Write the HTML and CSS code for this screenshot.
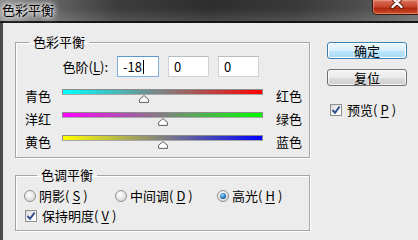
FILE: index.html
```html
<!DOCTYPE html>
<html>
<head>
<meta charset="utf-8">
<title>色彩平衡</title>
<link rel="stylesheet" href="styles.css">
</head>
<body>
<div class="window">
  <div class="titlebar">
    <span class="title">色彩平衡</span>
    <span class="close">
      <svg width="14" height="10" viewBox="0 0 14 10">
        <path d="M2.5 -2 L11.5 7 M11.5 -2 L2.5 7" stroke="#5a1a0c" stroke-width="4.2" stroke-linecap="round"/>
        <path d="M2.5 -2 L11.5 7 M11.5 -2 L2.5 7" stroke="#ffffff" stroke-width="2.4" stroke-linecap="round"/>
      </svg>
    </span>
  </div>
  <div class="client">
    <div class="left">
      <fieldset class="group g1">
        <legend>色彩平衡</legend>
        <div class="levels">
          <span class="lv-label">色阶(<u>L</u>):</span>
          <span class="input focus w42">-18<span class="caret"></span></span>
          <span class="input">0</span>
          <span class="input">0</span>
        </div>
        <div class="slider-row">
          <span class="sl-left">青色</span>
          <div class="slider">
            <div class="track t-cr"></div>
            <span class="thumb" style="left:41%"><svg width="10" height="8" viewBox="0 0 10 8"><path d="M5 0.6 L9.4 4.2 L9.4 7.4 L0.6 7.4 L0.6 4.2 Z" fill="#fff" stroke="#5f5f5f" stroke-width="1" stroke-linejoin="round"/></svg></span>
          </div>
          <span class="sl-right">红色</span>
        </div>
        <div class="slider-row">
          <span class="sl-left">洋红</span>
          <div class="slider">
            <div class="track t-mg"></div>
            <span class="thumb" style="left:50%"><svg width="10" height="8" viewBox="0 0 10 8"><path d="M5 0.6 L9.4 4.2 L9.4 7.4 L0.6 7.4 L0.6 4.2 Z" fill="#fff" stroke="#5f5f5f" stroke-width="1" stroke-linejoin="round"/></svg></span>
          </div>
          <span class="sl-right">绿色</span>
        </div>
        <div class="slider-row">
          <span class="sl-left">黄色</span>
          <div class="slider">
            <div class="track t-yb"></div>
            <span class="thumb" style="left:50%"><svg width="10" height="8" viewBox="0 0 10 8"><path d="M5 0.6 L9.4 4.2 L9.4 7.4 L0.6 7.4 L0.6 4.2 Z" fill="#fff" stroke="#5f5f5f" stroke-width="1" stroke-linejoin="round"/></svg></span>
          </div>
          <span class="sl-right">蓝色</span>
        </div>
      </fieldset>
      <fieldset class="group g2">
        <legend>色调平衡</legend>
        <div class="radios">
          <span class="opt o1"><span class="radio"></span>阴影(<u>S</u>)</span>
          <span class="opt o2"><span class="radio"></span>中间调(<u>D</u>)</span>
          <span class="opt"><span class="radio on"><span class="dot"></span></span>高光(<u>H</u>)</span>
        </div>
        <div class="opt check-row">
          <span class="checkbox"><svg width="10" height="10" viewBox="0 0 10 10"><path d="M1.5 5 L4 7.8 L8.6 1.6" fill="none" stroke="#2b4f8e" stroke-width="1.9"/></svg></span>保持明度(<u>V</u>)
        </div>
      </fieldset>
    </div>
    <div class="right">
      <button class="btn default">确定</button>
      <button class="btn">复位</button>
      <div class="opt preview">
        <span class="checkbox"><svg width="10" height="10" viewBox="0 0 10 10"><path d="M1.5 5 L4 7.8 L8.6 1.6" fill="none" stroke="#2b4f8e" stroke-width="1.9"/></svg></span>预览(<u>P</u>)
      </div>
    </div>
  </div>
</div>
</body>
</html>
```

FILE: styles.css
```css
* { box-sizing: border-box; }
html, body { margin: 0; padding: 0; }
body {
  width: 418px;
  height: 240px;
  overflow: hidden;
  background: #ececec;
  font-family: "Noto Sans CJK SC", "Microsoft YaHei", sans-serif;
  font-size: 13px;
  color: #000;
}
u { text-decoration: underline; text-underline-offset: 2px; }

.window {
  width: 418px;
  height: 240px;
  display: flex;
  flex-direction: column;
}

.titlebar {
  height: 23px;
  flex: none;
  display: flex;
  align-items: flex-start;
  border-bottom: 2px solid #151515;
  background:
    linear-gradient(to bottom, rgba(255,255,255,0) 40%, rgba(255,255,255,0.12) 100%),
    linear-gradient(to right, #8c8c8c 0%, #6a6a6a 10%, #3c3c3c 28%, #2e2e2e 50%, #383838 70%, #4c4c4c 85%, #6a6a6a 100%);
}
.title {
  padding: 2px 0 0 2px;
  font-size: 13px;
  line-height: 16px;
  color: #000;
  text-shadow: 0 0 4px #fff, 0 0 7px #fff, 0 0 10px rgba(255,255,255,0.9);
}
.close {
  margin-left: auto;
  width: 46px;
  height: 15px;
  border: 1px solid #3a1810;
  border-top: none;
  border-right: none;
  border-radius: 0 0 0 5px;
  background: linear-gradient(to bottom, #d9735c 0%, #c94a2e 45%, #b0280e 60%, #cc4f2a 100%);
  box-shadow: inset 0 0 0 1px rgba(255, 190, 170, 0.45);
  display: flex;
  justify-content: center;
  align-items: flex-start;
}
.close svg { display: block; margin-left: 2px; }

.client {
  flex: 1;
  display: flex;
  border-left: 3px solid #4b4b4b;
  padding-left: 12px;
  background: #ececec;
}
.left {
  width: 295px;
  flex: none;
  display: flex;
  flex-direction: column;
}

.group {
  margin: 0;
  padding: 0;
  min-width: 0;
  border: 1px solid #a5a5a5;
  box-shadow: 1px 1px 0 #fff, inset 1px 1px 0 #fff;
}
.group legend {
  margin-left: 13px;
  padding: 0 4px;
  font-size: 13px;
  line-height: 16px;
}
.g1 { margin-top: 11px; padding-bottom: 1px; }
.g2 { margin-top: 9px; padding: 0 0 5px 8px; }

.levels {
  display: flex;
  align-items: center;
  margin-top: 6px;
  height: 21px;
  gap: 9px;
}
.lv-label {
  width: 92px;
  text-align: right;
  white-space: nowrap;
}
.input {
  width: 41px;
  height: 21px;
  padding-left: 5px;
  display: flex;
  align-items: center;
  background: #fff;
  border: 1px solid #cfd3d8;
  border-top-color: #b7bcc2;
  line-height: 16px;
}
.input.w42 { width: 42px; }
.input.focus { border-color: #7fb0dd; border-top-color: #5d97cc; }
.caret {
  display: inline-block;
  width: 1px;
  height: 14px;
  background: #000;
  margin-left: 1px;
}

.slider-row {
  display: grid;
  grid-template-columns: 37px 201px auto;
  height: 23px;
  align-items: start;
  padding-left: 9px;
  white-space: nowrap;
}
.levels + .slider-row { margin-top: 10px; }
.sl-left, .sl-right {
  line-height: 16px;
  padding-top: 1px;
}
.sl-right { padding-left: 13px; }
.slider { position: relative; height: 23px; }
.track {
  margin-top: 2px;
  height: 6px;
  border: 1px solid #8d8d8d;
  border-bottom-color: #a9a9a9;
}
.t-cr { background: linear-gradient(to right, #00ffff, #808080 50%, #ff0000); }
.t-mg { background: linear-gradient(to right, #ff00ff, #808080 50%, #00ff00); }
.t-yb { background: linear-gradient(to right, #ffff00, #808080 50%, #0000ff); }
.thumb {
  position: absolute;
  top: 8px;
  transform: translateX(-50%);
  width: 10px;
  height: 8px;
}
.thumb svg { display: block; }

.radios {
  display: flex;
  margin-top: 4px;
  height: 18px;
  align-items: center;
  white-space: nowrap;
}
.opt {
  display: flex;
  align-items: center;
  gap: 3px;
  line-height: 16px;
  white-space: nowrap;
}
.o1 { width: 91px; }
.o2 { width: 102px; }
.radio {
  width: 12px;
  height: 12px;
  border-radius: 50%;
  border: 1px solid #8e8f8f;
  background: radial-gradient(circle at 40% 35%, #ffffff 0%, #e9e9e9 45%, #cfcfcf 100%);
  display: flex;
  align-items: center;
  justify-content: center;
}
.radio .dot {
  width: 6px;
  height: 6px;
  border-radius: 50%;
  background: radial-gradient(circle at 40% 35%, #a6dcfb 0%, #2a7bc0 50%, #0d3f74 100%);
}
.check-row {
  margin-top: 2px;
  height: 18px;
  padding-left: 1px;
}
.checkbox {
  width: 12px;
  height: 12px;
  border: 1px solid #8e8f8f;
  background: linear-gradient(135deg, #d9d9d9 0%, #f6f6f6 60%, #ffffff 100%);
  display: flex;
  align-items: center;
  justify-content: center;
  margin-right: 2px;
}
.checkbox svg { display: block; }

.right {
  margin-left: 17px;
  padding-top: 19px;
  display: flex;
  flex-direction: column;
  align-items: flex-start;
}
.btn {
  width: 80px;
  height: 17px;
  padding: 0;
  margin: 0;
  border: 1px solid #707070;
  border-radius: 3px;
  background: linear-gradient(to bottom, #f3f3f3 0%, #ebebeb 50%, #dddddd 51%, #cfcfcf 100%);
  box-shadow: inset 0 0 0 1px rgba(255,255,255,0.75);
  font-family: "Noto Sans CJK SC", "Microsoft YaHei", sans-serif;
  font-size: 13px;
  line-height: 15px;
  color: #000;
  text-align: center;
}
.btn.default {
  border-color: #3c7fb1;
  background: linear-gradient(to bottom, #eaf6fd 0%, #d9f0fc 50%, #bee6fd 51%, #a7d9f5 100%);
  box-shadow: inset 0 0 0 1px #fff;
}
.btn + .btn { margin-top: 10px; }
.preview {
  margin-top: 16px;
  margin-left: 3px;
  height: 16px;
}
```
